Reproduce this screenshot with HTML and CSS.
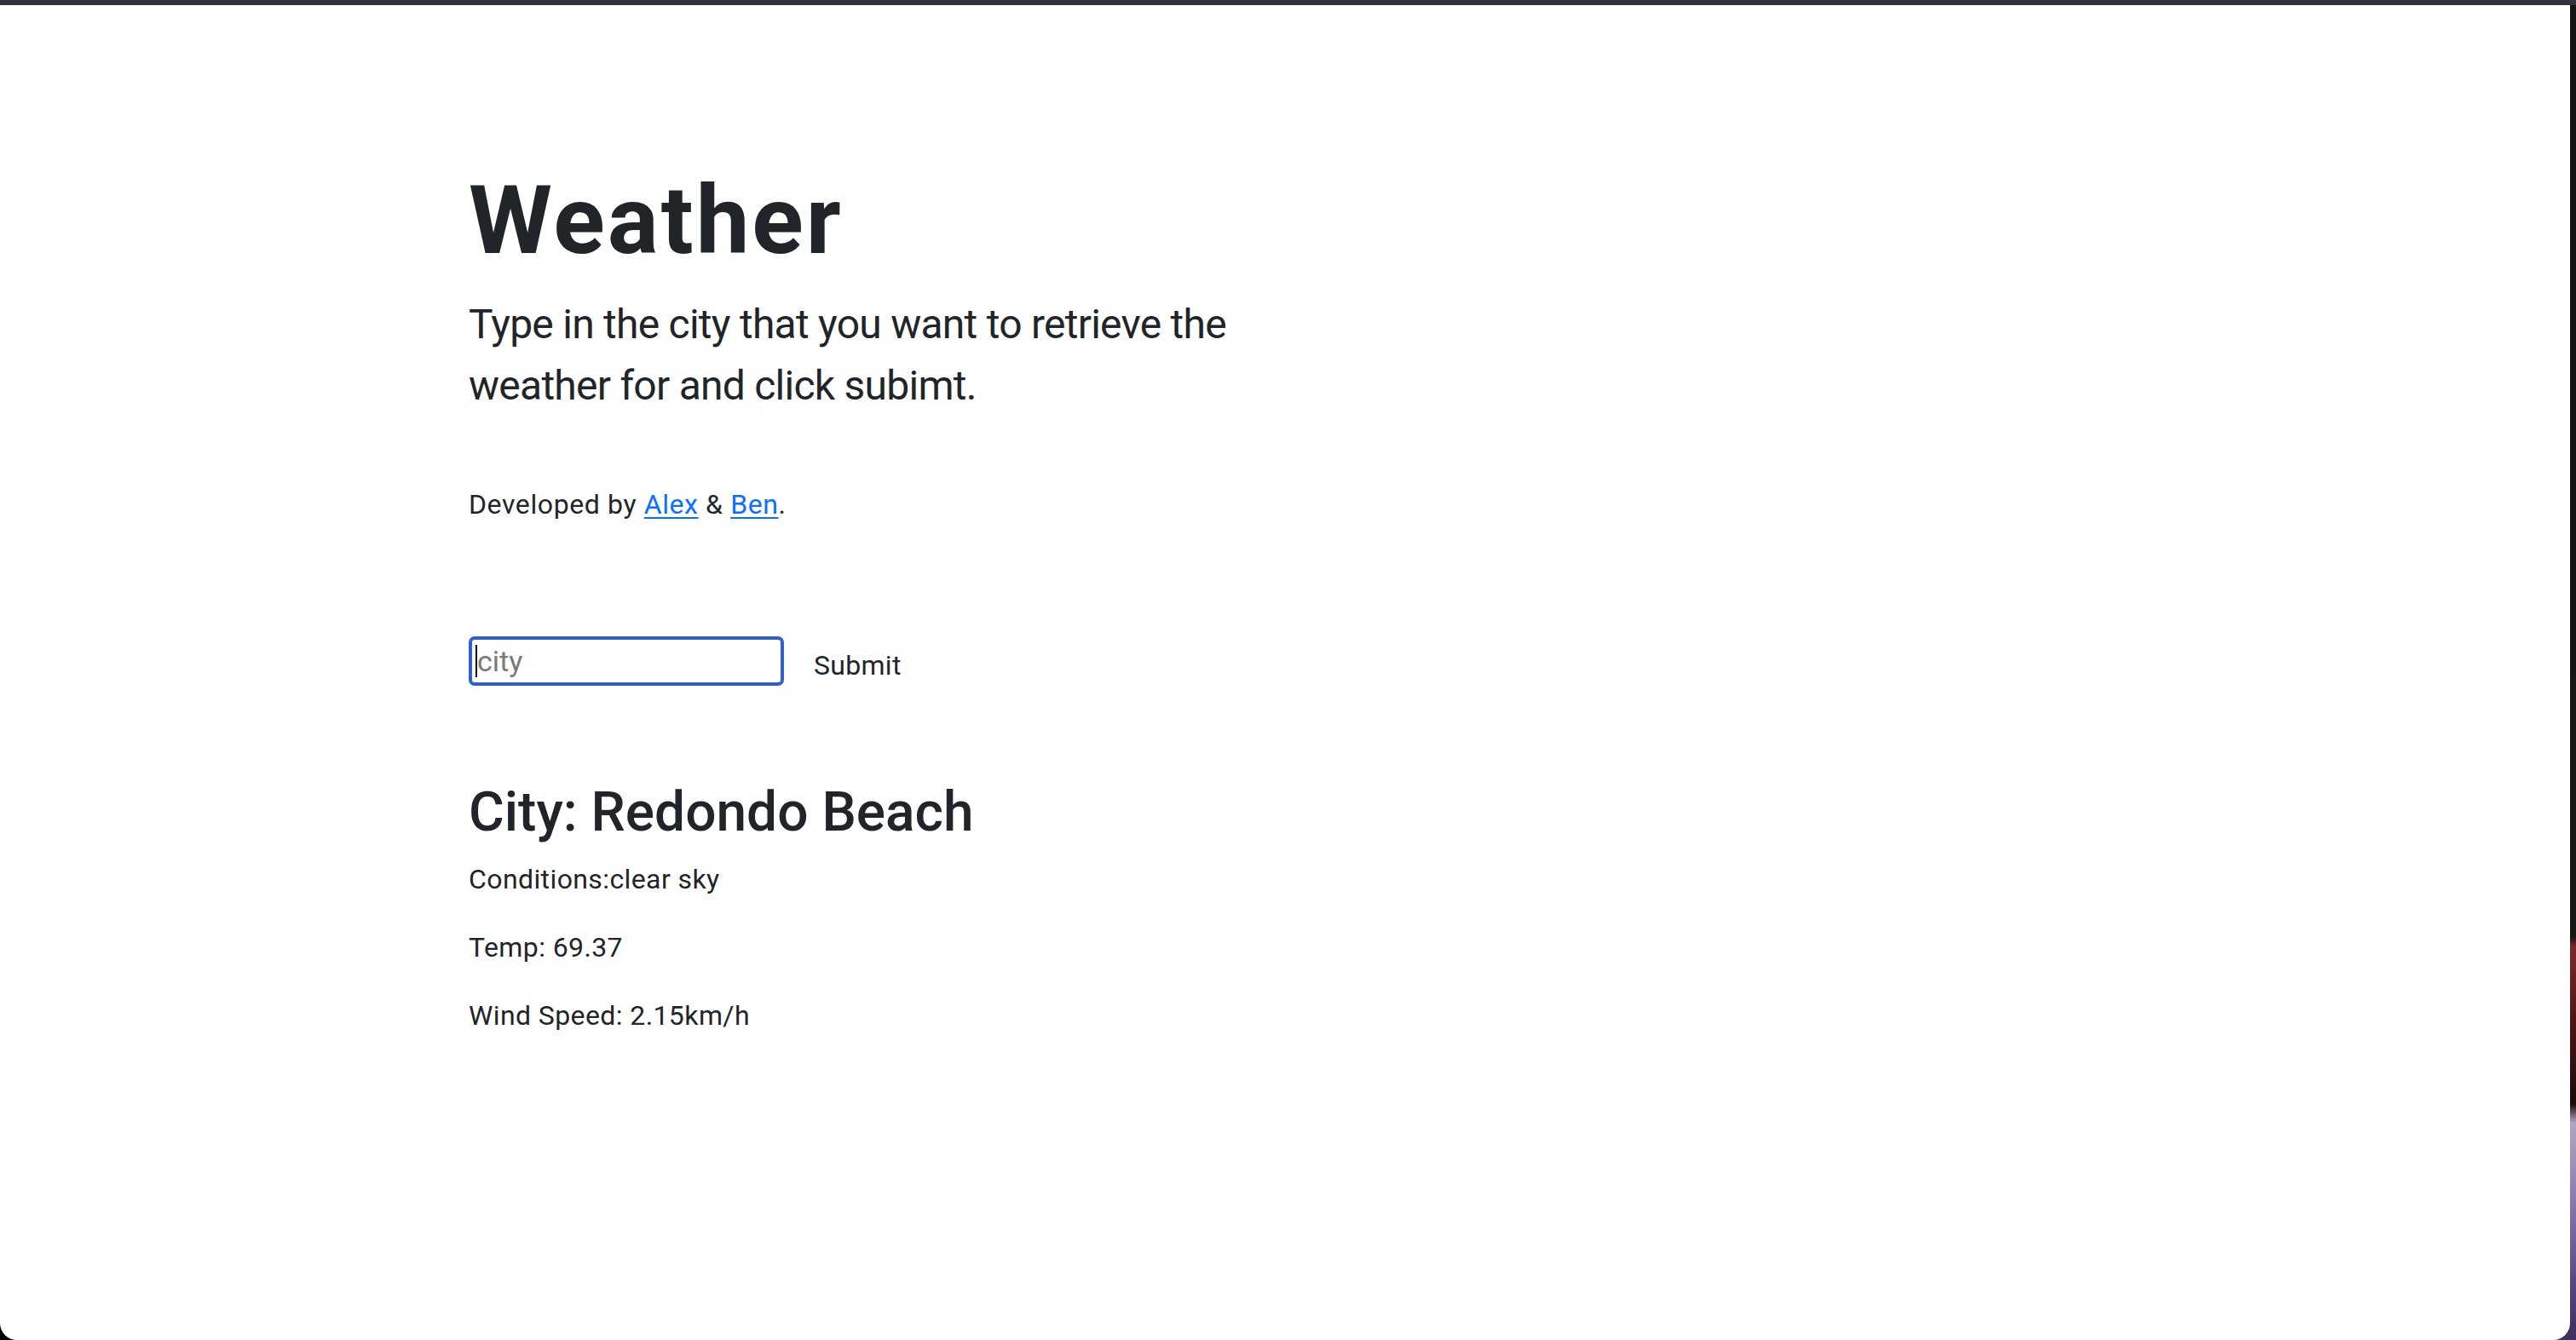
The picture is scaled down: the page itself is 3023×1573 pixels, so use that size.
FILE: index.html
```html
<!DOCTYPE html>
<html lang="en">
<head>
<meta charset="utf-8">
<title>Weather</title>
<link rel="stylesheet" href="styles.css">
</head>
<body>
<div class="topbar"></div>
<div class="window">
  <main class="content">
    <h1 class="title">Weather</h1>
    <p class="lead">Type in the city that you want to retrieve the weather for and click subimt.</p>
    <p class="credits">Developed by <a href="#">Alex</a> &amp; <a href="#">Ben</a>.</p>
    <form class="search">
      <span class="field">
        <input class="city-input" type="text" placeholder="city">
        <span class="caret"></span>
      </span>
      <button class="submit" type="button">Submit</button>
    </form>
    <section class="result">
      <h2 class="city-name">City: Redondo Beach</h2>
      <p class="info">Conditions:clear sky</p>
      <p class="info">Temp: 69.37</p>
      <p class="info">Wind Speed: 2.15km/h</p>
    </section>
  </main>
</div>
</body>
</html>
```

FILE: styles.css
```css
html, body {
  margin: 0;
  padding: 0;
}

body {
  width: 3023px;
  height: 1573px;
  overflow: hidden;
  font-family: Roboto, "Noto Sans", sans-serif;
  color: #212529;
  background:
    linear-gradient(to bottom,
      #141414 0px, #161616 1100px,
      #7c2a28 1112px, #4a1616 1200px, #1c0a0a 1296px,
      #b4a6c0 1318px, #8e7fae 1400px, #5a4a80 1500px, #3e2f5e 1573px) right top / 40px 100% no-repeat,
    #000;
}

.topbar {
  height: 6px;
  background: #30323f;
}

.window {
  height: 1567px;
  margin-right: 7px;
  background: #fff;
  border-radius: 0 0 20px 20px;
  overflow: hidden;
}

.content {
  padding: 186px 0 0 550px;
}

.title {
  margin: 0 0 19px;
  font-size: 112px;
  line-height: 134px;
  font-weight: 700;
  letter-spacing: 3px;
}

.lead {
  margin: 0 0 79px;
  max-width: 960px;
  font-size: 48px;
  line-height: 72px;
  font-weight: 400;
  letter-spacing: -0.75px;
}

.credits {
  margin: 0 0 131px;
  font-size: 32px;
  line-height: 48px;
  letter-spacing: 0.6px;
}

.credits a {
  color: #0d6efd;
  text-decoration: underline;
  text-underline-offset: 4px;
  text-decoration-thickness: 2px;
}

.search {
  display: flex;
  align-items: flex-start;
  gap: 11px;
  margin: 0 0 110px;
}

.field {
  position: relative;
  display: block;
}

.city-input {
  display: block;
  box-sizing: border-box;
  width: 370px;
  height: 58px;
  margin: 0;
  padding: 0 6px;
  border: 4px solid #2b63c8;
  border-radius: 7px;
  outline: none;
  background: #fff;
  font-family: Roboto, "Noto Sans", sans-serif;
  font-size: 34px;
  color: #212529;
}

.city-input::placeholder {
  color: #7a7a7a;
}

.caret {
  position: absolute;
  left: 8px;
  top: 10px;
  width: 2px;
  height: 38px;
  background: #000;
}

.submit {
  margin: 10px 0 0;
  padding: 0 24px;
  border: 0;
  background: transparent;
  font-family: Roboto, "Noto Sans", sans-serif;
  font-size: 32px;
  line-height: 48px;
  letter-spacing: 0.3px;
  color: #212529;
}

.city-name {
  margin: 0 0 16px;
  font-size: 64px;
  line-height: 77px;
  font-weight: 500;
}

.info {
  margin: 0 0 32px;
  font-size: 32px;
  line-height: 48px;
  letter-spacing: 0.4px;
}
```
